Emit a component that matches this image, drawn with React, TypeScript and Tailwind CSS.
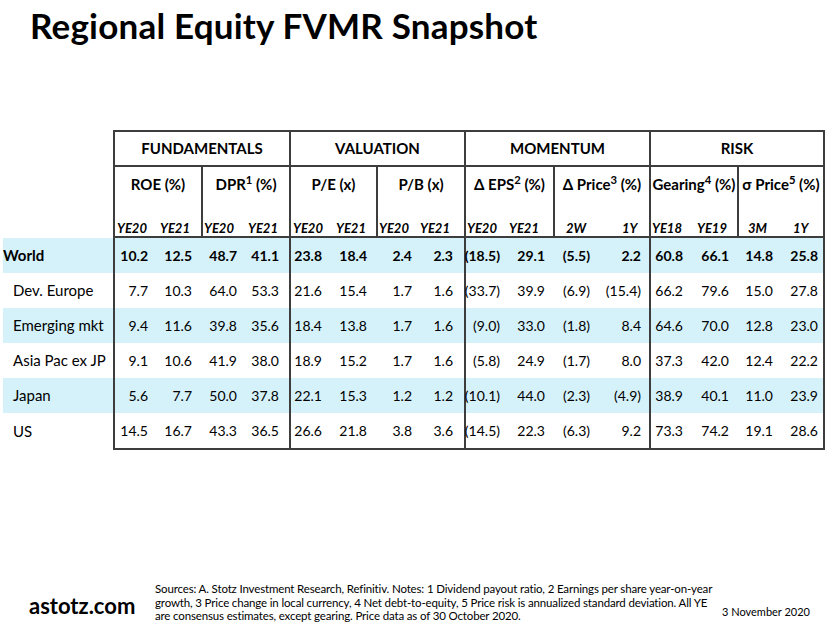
import React from 'react';

type Row = { name: string; values: string[]; blue?: boolean; bold?: boolean };

const rows: Row[] = [
  {
    name: 'World',
    blue: true,
    bold: true,
    values: ['10.2', '12.5', '48.7', '41.1', '23.8', '18.4', '2.4', '2.3', '(18.5)', '29.1', '(5.5)', '2.2', '60.8', '66.1', '14.8', '25.8'],
  },
  {
    name: 'Dev. Europe',
    values: ['7.7', '10.3', '64.0', '53.3', '21.6', '15.4', '1.7', '1.6', '(33.7)', '39.9', '(6.9)', '(15.4)', '66.2', '79.6', '15.0', '27.8'],
  },
  {
    name: 'Emerging mkt',
    blue: true,
    values: ['9.4', '11.6', '39.8', '35.6', '18.4', '13.8', '1.7', '1.6', '(9.0)', '33.0', '(1.8)', '8.4', '64.6', '70.0', '12.8', '23.0'],
  },
  {
    name: 'Asia Pac ex JP',
    values: ['9.1', '10.6', '41.9', '38.0', '18.9', '15.2', '1.7', '1.6', '(5.8)', '24.9', '(1.7)', '8.0', '37.3', '42.0', '12.4', '22.2'],
  },
  {
    name: 'Japan',
    blue: true,
    values: ['5.6', '7.7', '50.0', '37.8', '22.1', '15.3', '1.2', '1.2', '(10.1)', '44.0', '(2.3)', '(4.9)', '38.9', '40.1', '11.0', '23.9'],
  },
  {
    name: 'US',
    values: ['14.5', '16.7', '43.3', '36.5', '26.6', '21.8', '3.8', '3.6', '(14.5)', '22.3', '(6.3)', '9.2', '73.3', '74.2', '19.1', '28.6'],
  },
];

// right padding per data column, so numbers line up like the sheet
const padR = [
  'pr-[9px]', 'pr-[9px]', 'pr-[8px]', 'pr-[10px]',
  'pr-[11px]', 'pr-[9px]', 'pr-[8px]', 'pr-[11px]',
  'pr-[9px]', 'pr-[8px]', 'pr-[11px]', 'pr-[8px]',
  'pr-[10px]', 'pr-[8px]', 'pr-[8px]', 'pr-[5px]',
];

const groups = ['FUNDAMENTALS', 'VALUATION', 'MOMENTUM', 'RISK'];

type Sub = { title: React.ReactNode; labels: [string, string]; first: string; pl1: string; pl2: string };

const subs: Sub[] = [
  { title: 'ROE (%)', labels: ['YE20', 'YE21'], first: 'w-[42px]', pl1: 'pl-[2px]', pl2: 'pl-[3px]' },
  { title: <>DPR<sup>1</sup> (%)</>, labels: ['YE20', 'YE21'], first: 'w-[42px]', pl1: 'pl-[1px]', pl2: 'pl-[3px]' },
  { title: 'P/E (x)', labels: ['YE20', 'YE21'], first: 'w-[42px]', pl1: 'pl-[2px]', pl2: 'pl-[3px]' },
  { title: 'P/B (x)', labels: ['YE20', 'YE21'], first: 'w-[42px]', pl1: 'pl-[1px]', pl2: 'pl-0' },
  { title: <>Δ EPS<sup>2</sup> (%)</>, labels: ['YE20', 'YE21'], first: 'w-[43px]', pl1: 'pl-[1px]', pl2: 'pl-0' },
  { title: <>Δ Price<sup>3</sup> (%)</>, labels: ['2W', '1Y'], first: 'w-[46px]', pl1: 'pl-[11px]', pl2: 'pl-[21px]' },
  { title: <>Gearing<sup>4</sup> (%)</>, labels: ['YE18', 'YE19'], first: 'w-[42px]', pl1: 'pl-[1px]', pl2: 'pl-[4px]' },
  { title: <>σ Price<sup>5</sup> (%)</>, labels: ['3M', '1Y'], first: 'w-[42px]', pl1: 'pl-[9px]', pl2: 'pl-[12px]' },
];

const line = 'border-[#3d3d3d]';

const App: React.FC = () => {
  return (
    <div className="w-[829px] h-[631px] overflow-hidden bg-white text-black [font-family:Lato,'Noto_Sans',sans-serif]">
      <h1 className="pl-[30px] pt-[4px] text-[35px] leading-[42px] font-bold tracking-[0.2px]">
        Regional Equity FVMR Snapshot
      </h1>

      <div className="mt-[84px] pl-[3px]">
        <div className="grid grid-cols-[110px_44px_44px_44px_44px_44px_43px_44px_44px_45px_44px_48px_48px_44px_44px_44px_44px]">
          {/* group header */}
          <div />
          {groups.map((g, i) => (
            <div
              key={g}
              className={`col-span-4 h-[37px] border-t-2 border-b-2 border-l-2 ${i === 3 ? 'border-r-2' : ''} ${line} flex items-center justify-center text-[15px] font-bold`}
            >
              {g}
            </div>
          ))}

          {/* sub header */}
          <div />
          {subs.map((s, i) => (
            <div
              key={i}
              className={`col-span-2 h-[71px] border-l-2 border-b-2 ${i === 7 ? 'border-r-2' : ''} ${line} flex flex-col`}
            >
              <div className="pt-[8px] text-center text-[15px] leading-[18px] font-bold whitespace-nowrap">{s.title}</div>
              <div className="mt-auto flex text-[13px] leading-[16px] font-bold italic">
                <div className={`${s.first} ${s.pl1}`}>{s.labels[0]}</div>
                <div className={s.pl2}>{s.labels[1]}</div>
              </div>
            </div>
          ))}

          {/* body */}
          {rows.map((r, ri) => {
            const last = ri === rows.length - 1;
            const bg = r.blue ? 'bg-[#d5f2fb]' : '';
            return (
              <React.Fragment key={r.name}>
                <div
                  className={`${last ? 'h-[37px]' : 'h-[35px]'} ${bg} flex items-center ${r.bold ? 'font-bold pl-0' : 'pl-[10px]'} text-[15px] whitespace-nowrap`}
                >
                  {r.name}
                </div>
                {r.values.map((v, ci) => (
                  <div
                    key={ci}
                    className={`${last ? 'h-[37px] border-b-2' : 'h-[35px]'} ${ci % 4 === 0 ? 'border-l-2' : ''} ${ci === 15 ? 'border-r-2' : ''} ${line} ${bg} ${padR[ci]} flex items-center justify-end text-[14px] ${r.bold ? 'font-bold' : ''} whitespace-nowrap`}
                  >
                    {v}
                  </div>
                ))}
              </React.Fragment>
            );
          })}
        </div>
      </div>

      <footer className="mt-[132px] pl-[29px] flex items-start">
        <div className="w-[126px] mt-[11px] text-[22px] leading-[26px] font-bold">astotz.com</div>
        <div className="w-[567px] text-[11.5px] leading-[13.5px] tracking-[-0.15px] whitespace-nowrap">
          Sources: A. Stotz Investment Research, Refinitiv. Notes: 1 Dividend payout ratio, 2 Earnings per share year-on-year
          <br />
          growth, 3 Price change in local currency, 4 Net debt-to-equity, 5 Price risk is annualized standard deviation. All YE
          <br />
          are consensus estimates, except gearing. Price data as of 30 October 2020.
        </div>
        <div className="mt-[23px] text-[11px] leading-[13.5px] whitespace-nowrap">3 November 2020</div>
      </footer>
    </div>
  );
};

export default App;
